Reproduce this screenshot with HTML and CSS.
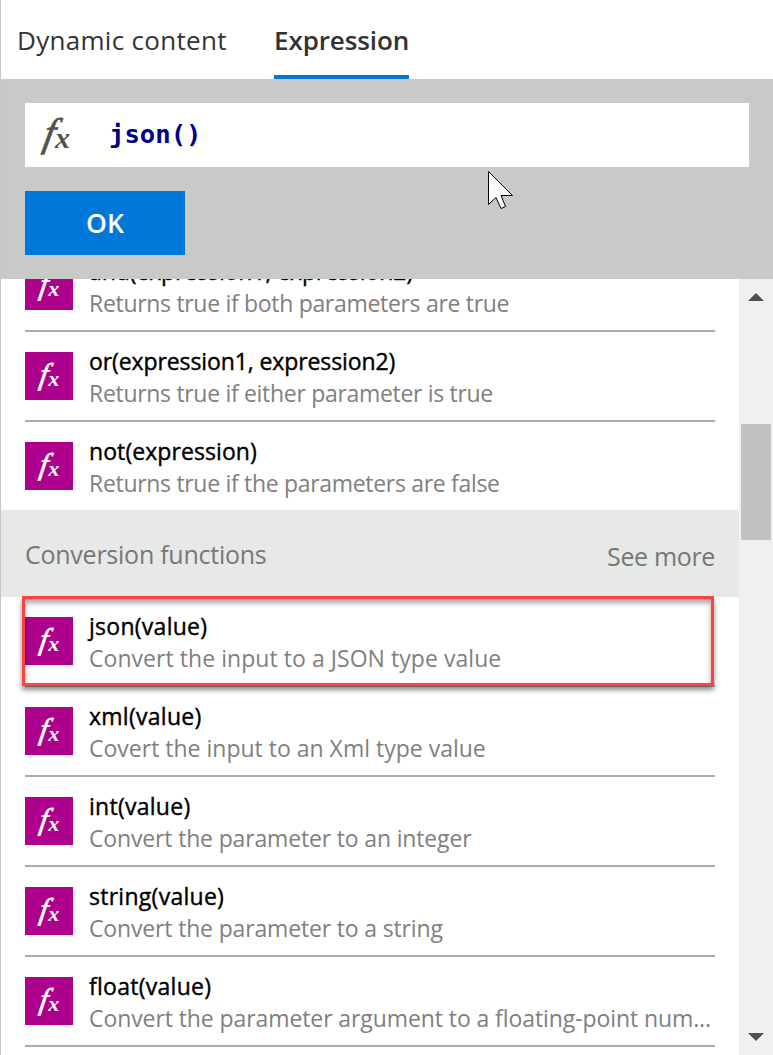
FILE: index.html
```html
<!DOCTYPE html>
<html lang="en">
<head>
<meta charset="utf-8">
<title>Expression</title>
<link rel="stylesheet" href="styles.css">
</head>
<body>
<svg class="defs" aria-hidden="true">
  <symbol id="fx" viewBox="0 0 48 48">
    <text class="fx-f" transform="translate(13.5 32) skewX(-9)" font-size="30">f</text>
    <text class="fx-x" x="23.2" y="34" font-size="22">x</text>
  </symbol>
</svg>
<main class="panel">
  <nav class="tabs">
    <a class="tab tab-dynamic">Dynamic content</a>
    <a class="tab tab-active">Expression</a>
  </nav>
  <section class="editor">
    <div class="input">
      <svg class="input-fx" viewBox="0 0 60 64">
        <text class="fx-f" transform="translate(17 42.5) skewX(-11)" font-size="40">f</text>
        <text class="fx-x" x="30" y="45" font-size="30">x</text>
      </svg>
      <span class="code">json()</span>
    </div>
    <button class="ok">OK</button>
    <svg class="cursor" viewBox="0 0 26 40"><path d="M.5.5V33.5L8 26.5L13 37.5L17.5 35.5L13 24.5H24.5Z"/></svg>
  </section>
  <section class="results">
    <div class="list">
      <div class="row logical"><svg class="icon"><use href="#fx"/></svg><div class="text"><div class="name">and(expression1, expression2)</div><div class="desc">Returns true if both parameters are true</div></div></div>
      <div class="row logical"><svg class="icon"><use href="#fx"/></svg><div class="text"><div class="name">or(expression1, expression2)</div><div class="desc">Returns true if either parameter is true</div></div></div>
      <div class="row logical row-last"><svg class="icon"><use href="#fx"/></svg><div class="text"><div class="name name-not">not(expression)</div><div class="desc">Returns true if the parameters are false</div></div></div>
      <header class="group"><span class="group-title">Conversion functions</span><a class="more">See more</a></header>
      <div class="row row-marked"><svg class="icon"><use href="#fx"/></svg><div class="text"><div class="name">json(value)</div><div class="desc">Convert the input to a JSON type value</div></div></div>
      <div class="row"><svg class="icon"><use href="#fx"/></svg><div class="text"><div class="name">xml(value)</div><div class="desc">Covert the input to an Xml type value</div></div></div>
      <div class="row scalar"><svg class="icon"><use href="#fx"/></svg><div class="text"><div class="name">int(value)</div><div class="desc">Convert the parameter to an integer</div></div></div>
      <div class="row scalar"><svg class="icon"><use href="#fx"/></svg><div class="text"><div class="name">string(value)</div><div class="desc">Convert the parameter to a string</div></div></div>
      <div class="row float"><svg class="icon"><use href="#fx"/></svg><div class="text"><div class="name">float(value)</div><div class="desc">Convert the parameter argument to a floating-point num...</div></div></div>
    </div>
    <div class="scrollbar">
      <svg class="arrow" viewBox="0 0 16 8"><path d="M0 8L8 0L16 8Z"/></svg>
      <div class="thumb"></div>
      <svg class="arrow arrow-down" viewBox="0 0 16 8"><path d="M0 0H16L8 8Z"/></svg>
    </div>
  </section>
</main>
</body>
</html>
```
FILE: styles.css
```css
*, *::before, *::after { box-sizing: border-box; }
body { margin: 0; background: #fff; font-family: "Open Sans", "Noto Sans", sans-serif; }
.defs { position: absolute; width: 0; height: 0; }
.panel { position: relative; display: flex; flex-direction: column; width: 773px; height: 1055px; overflow: hidden; border-left: 1px solid #c8c6c6; }
.panel::before { content: ""; position: absolute; left: -1px; top: 303px; width: 1px; height: 31px; background: #fff; }
.tabs { display: flex; height: 79px; padding-left: 16px; gap: 48px; font-size: 26px; color: #333; }
.tab { height: 79px; line-height: 80px; white-space: nowrap; }
.tab-dynamic { width: 209px; letter-spacing: 0.3px; }
.tab-active { width: 135px; border-bottom: 4px solid #0078d7; font-weight: 600; letter-spacing: -0.1px; }
.editor { position: relative; display: flex; flex-direction: column; gap: 24px; height: 200px; padding: 24px; background: #c8cac7; }
.input { display: flex; align-items: center; width: 724px; height: 64px; background: #fffffe; }
.input-fx { width: 60px; height: 64px; fill: #505250; stroke: #505250; }
.fx-f, .fx-x { font-family: "Liberation Serif", serif; font-style: italic; }
.fx-f { stroke-width: 0.7px; }
.fx-x { font-weight: 700; stroke: none; }
.code { margin: -2px 0 0 24px; font: 700 25.6px/60px "DejaVu Sans Mono", monospace; color: #00008b; }
.ok { width: 160px; height: 64px; padding: 1px 0 0; border: 0; background: #0078d9; color: #fff; font: 600 26.5px/63px "Open Sans", sans-serif; }
.cursor { position: absolute; left: 487px; top: 92px; width: 26px; height: 40px; fill: #fff; stroke: #000; stroke-width: 1; }
.results { display: flex; height: 776px; overflow: hidden; }
.list { width: 738px; margin-top: -37px; }
.row { position: relative; display: flex; gap: 16px; height: 90px; margin: 0 24px; padding-top: 20px; border-bottom: 2px solid #ababab; }
.row-last { height: 88px; border-bottom: 0; }
.icon { flex: none; width: 48px; height: 48px; background: #ad008c; fill: #fff; stroke: #fff; }
.text { margin-top: -7px; white-space: nowrap; }
.name { font-size: 23px; line-height: 32px; letter-spacing: 0.27px; color: #000; -webkit-text-stroke: 0.4px #000; }
.desc { font-size: 23px; line-height: 32px; color: #808080; }
.logical .name { letter-spacing: -0.1px; }
.logical .name-not { letter-spacing: 0.08px; }
.logical .desc { letter-spacing: -0.31px; }
.row-marked .desc { letter-spacing: 0.05px; }
.scalar .desc { letter-spacing: -0.16px; }
.float .desc { letter-spacing: -0.09px; }
.group { display: flex; justify-content: space-between; height: 87px; padding: 0 24px; background: #e7e9e6; color: #777; font-size: 25px; line-height: 88px; letter-spacing: -0.25px; }
.more { line-height: 92px; letter-spacing: -0.35px; }
.row-marked::after { content: ""; position: absolute; left: -3px; top: -1px; width: 692px; height: 90px; border: 3px solid #ff4343; box-shadow: 0 4px 5px rgba(0,0,0,.45), inset 0 4px 5px rgba(0,0,0,.35); }
.scrollbar { display: flex; flex-direction: column; width: 34px; padding: 14px 0 14px 2px; background: #f0f0f0; }
.arrow { width: 16px; height: 8px; margin-left: 7px; fill: #505050; }
.arrow-down { margin-top: auto; }
.thumb { width: 30px; height: 116px; margin-top: 123px; background: #c1c1c1; }
```
